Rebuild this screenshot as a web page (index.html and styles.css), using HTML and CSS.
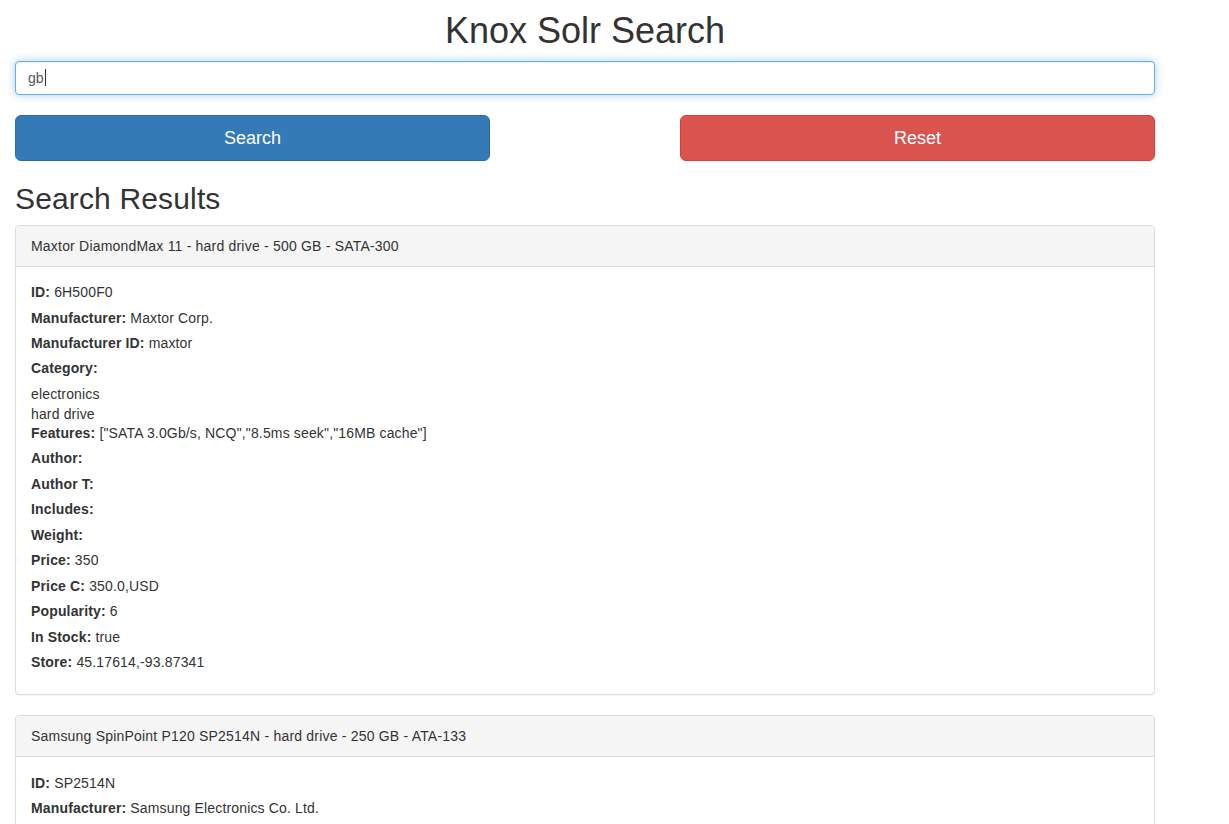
FILE: index.html
```html
<!DOCTYPE html>
<html lang="en">
<head>
<meta charset="utf-8">
<title>Knox Solr Search</title>
<link rel="stylesheet" href="styles.css">
</head>
<body>
<div class="page">
  <h1 class="title">Knox Solr Search</h1>
  <div class="search-input" role="textbox"><span class="typed">gb</span><span class="caret"></span></div>
  <div class="actions">
    <button class="btn btn-primary" type="button">Search</button>
    <button class="btn btn-danger" type="button">Reset</button>
  </div>
  <h2 class="results-title">Search Results</h2>

  <div class="panel">
    <div class="panel-heading">Maxtor DiamondMax 11 - hard drive - 500 GB - SATA-300</div>
    <div class="panel-body">
      <div class="field"><b>ID:</b> 6H500F0</div>
      <div class="field"><b>Manufacturer:</b> Maxtor Corp.</div>
      <div class="field"><b>Manufacturer ID:</b> maxtor</div>
      <div class="field"><b>Category:</b></div>
      <div class="values"><div>electronics</div><div>hard drive</div></div>
      <div class="field"><b>Features:</b> ["SATA 3.0Gb/s, NCQ","8.5ms seek","16MB cache"]</div>
      <div class="field"><b>Author:</b></div>
      <div class="field"><b>Author T:</b></div>
      <div class="field"><b>Includes:</b></div>
      <div class="field"><b>Weight:</b></div>
      <div class="field"><b>Price:</b> 350</div>
      <div class="field"><b>Price C:</b> 350.0,USD</div>
      <div class="field"><b>Popularity:</b> 6</div>
      <div class="field"><b>In Stock:</b> true</div>
      <div class="field"><b>Store:</b> 45.17614,-93.87341</div>
    </div>
  </div>

  <div class="panel">
    <div class="panel-heading">Samsung SpinPoint P120 SP2514N - hard drive - 250 GB - ATA-133</div>
    <div class="panel-body">
      <div class="field"><b>ID:</b> SP2514N</div>
      <div class="field"><b>Manufacturer:</b> Samsung Electronics Co. Ltd.</div>
      <div class="field"><b>Manufacturer ID:</b> samsung</div>
      <div class="field"><b>Category:</b></div>
      <div class="values"><div>electronics</div><div>hard drive</div></div>
      <div class="field"><b>Features:</b> ["7200RPM, 8MB cache, IDE Ultra ATA-133","NoiseGuard, SilentSeek technology, Fluid Dynamic Bearing (FDB) motor"]</div>
      <div class="field"><b>Author:</b></div>
      <div class="field"><b>Author T:</b></div>
      <div class="field"><b>Includes:</b></div>
      <div class="field"><b>Weight:</b></div>
      <div class="field"><b>Price:</b> 92</div>
      <div class="field"><b>Price C:</b> 92.0,USD</div>
      <div class="field"><b>Popularity:</b> 6</div>
      <div class="field"><b>In Stock:</b> true</div>
      <div class="field"><b>Store:</b> 35.0752,-97.032</div>
    </div>
  </div>
</div>
</body>
</html>
```
FILE: styles.css
```css
html, body {
  margin: 0;
  padding: 0;
  background: #fff;
}
body {
  font-family: "Liberation Sans", Arial, Helvetica, sans-serif;
  font-size: 14px;
  line-height: 20px;
  color: #333;
}
.page {
  width: 1140px;
  padding: 0 15px;
}
.title {
  margin: 11px 0 10px;
  font-size: 36px;
  line-height: 1.1;
  font-weight: 500;
  text-align: center;
}
.search-input {
  box-sizing: border-box;
  height: 34px;
  padding: 6px 12px;
  font-size: 14px;
  line-height: 20px;
  color: #555;
  background: #fff;
  border: 1px solid #66afe9;
  border-radius: 4px;
  box-shadow: inset 0 1px 1px rgba(0,0,0,.075), 0 0 8px rgba(102,175,233,.6);
  display: flex;
  align-items: center;
}
.caret {
  display: inline-block;
  width: 1px;
  height: 17px;
  background: #333;
  margin-left: 1px;
}
.actions {
  display: grid;
  grid-template-columns: 5fr 2fr 5fr;
  margin-top: 20px;
}
.btn {
  box-sizing: border-box;
  height: 46px;
  padding: 10px 16px;
  font-family: inherit;
  font-size: 18px;
  line-height: 24px;
  color: #fff;
  border: 1px solid transparent;
  border-radius: 6px;
  text-align: center;
  cursor: pointer;
}
.btn-primary {
  grid-column: 1;
  background: #337ab7;
  border-color: #2e6da4;
}
.btn-danger {
  grid-column: 3;
  background: #d9534f;
  border-color: #d43f3a;
}
.results-title {
  margin: 21px 0 10px;
  font-size: 30px;
  line-height: 1.1;
  font-weight: 500;
  letter-spacing: 0.15px;
}
.panel {
  margin-bottom: 20px;
  background: #fff;
  border: 1px solid #ddd;
  border-radius: 4px;
  box-shadow: 0 1px 1px rgba(0,0,0,.05);
  letter-spacing: 0.15px;
}
.panel-heading {
  padding: 10px 15px;
  background: #f5f5f5;
  border-bottom: 1px solid #ddd;
  border-radius: 3px 3px 0 0;
  letter-spacing: 0.2px;
}
.panel-body {
  padding: 8.5px 15px 14px;
}
.field {
  margin: 10px 0;
  line-height: 15.45px;
}
.field b {
  font-weight: 700;
}
.values {
  margin: -3px 0 -8px;
  line-height: 20px;
}
```
